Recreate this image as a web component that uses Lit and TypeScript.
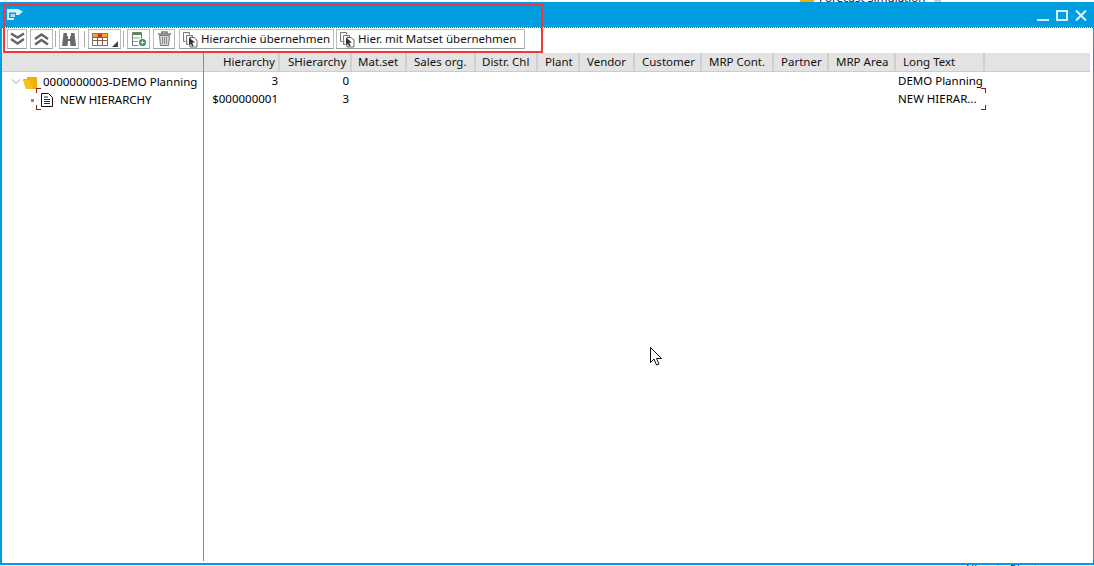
import { LitElement, html, css, svg } from "lit";
import { customElement } from "lit/decorators.js";

const copyIcon = svg`<svg class="ci" width="17" height="17" viewBox="0 0 17 17"><path d="M1.500 1.500h6v2M1.500 1.500v9h2" fill="#eee" stroke="#777"/><path d="M4.500 4.500h6v2M4.500 4.500v9h2" fill="#ddd" stroke="#777"/><path d="M8 6.500h4l3 2.500v7H8z" fill="#fff" stroke="#666"/><path d="M7 6.500l6 5-2.800.3 1.400 3-1.500.7-1.300-3-1.800 1.800z" fill="#333"/></svg>`;

const cols: [string, number, number][] = [
  ["Hierarchy", 76, 19], ["SHierarchy", 72, 8], ["Mat.set", 55, 6], ["Sales org.", 69, 7],
  ["Distr. Chl", 62, 6], ["Plant", 42, 7], ["Vendor", 55, 7], ["Customer", 67, 7],
  ["MRP Cont.", 72, 7], ["Partner", 55, 7], ["MRP Area", 67, 7], ["Long Text", 89, 7],
];

@customElement("app-root")
export class AppRoot extends LitElement {
  static styles = css`
    :host { display: block; position: relative; width: 1094px; height: 566px; overflow: hidden; background: #fff;
      font-family: "Noto Sans", sans-serif; font-size: 11.5px; color: #000; }
    .behind { position: absolute; white-space: nowrap; color: #222; }
    .b1 { left: 800px; top: -8px; width: 14px; height: 10px; background: #f0b000; }
    .b2 { left: 819px; top: -10px; }
    .b3 { left: 934px; top: -8px; width: 7px; height: 10px; background: #ccc; }
    .b4 { left: 964px; top: 561px; }
    .window { position: absolute; inset: 2px 0 1px 0; border: 2px solid #009de0; border-top: 0; border-right-width: 1px; display: flex; flex-direction: column; background: #fff; }
    .title { height: 25px; margin: 0 -1px 0 -2px; background: #009de0; display: flex; align-items: center; justify-content: space-between; padding: 0 7px 0 7px; flex: none; }
    .winbtns { display: flex; gap: 7px; align-items: center; }
    .toolbar { height: 26px; flex: none; display: flex; align-items: flex-start; padding: 1px 0 0 5px; border-top: 1px dotted #555; box-sizing: border-box; }
    .tb { height: 20px; box-sizing: border-box; border: 1px solid #bbb; border-bottom-color: #999; background: #fff; display: flex; align-items: center; justify-content: center; color: #111; white-space: nowrap; flex: none; }
    .sep { width: 1px; height: 16px; background: #aaa; margin: 2px 3px 0 2px; flex: none; }
    .sp3 { width: 3px; flex: none; }
    .sp4 { width: 4px; flex: none; }
    .sp2 { width: 2px; flex: none; }
    .txt { gap: 2px; padding: 0 0 0 2px; justify-content: flex-start; }
    .txt span { margin-top: -2px; }
    .ci { flex: none; }
    .main { flex: 1; display: flex; min-height: 0; padding: 0 3px 2px 0; }
    .tree { width: 201px; flex: none; border-right: 1px solid #8a8a8a; }
    .tree-head { height: 18px; background: #e3e3e3; border-bottom: 1px solid #ccc; }
    .tree-body { padding-top: 1px; }
    .node { height: 18px; display: flex; align-items: center; white-space: nowrap; position: relative; }
    .node span { margin-top: -2px; }
    .node svg { flex: none; }
    .caret { margin-left: 9px; }
    .folder { margin: 0 6px 0 2px; }
    .bullet { width: 3px; height: 3px; background: #888; margin: 0 7px 0 29px; flex: none; }
    .doc { margin-right: 7px; }
    .mark { position: absolute; width: 4px; height: 4px; border: 0 solid #a01020; }
    .ml { left: 34px; border-left-width: 1px; }
    .mr { left: 777px; border-right-width: 1px; }
    .mt { top: -3px; border-top-width: 1px; }
    .mb { bottom: -1px; border-bottom-width: 1px; }
    .grid { flex: 1; min-width: 0; }
    .head { height: 18px; display: flex; background: #e3e3e3; border-bottom: 1px solid #ccc; }
    .hc { box-sizing: border-box; border-right: 2px solid #cfcfcf; white-space: nowrap; flex: none; line-height: 18px; color: #111; }
    .rows { padding-top: 1px; }
    .row { height: 18px; display: flex; align-items: flex-start; line-height: 16px; position: relative; white-space: nowrap; }
    .c { box-sizing: border-box; flex: none; }
    .r { text-align: right; }
    .c1 { width: 74px; }
    .c2 { width: 71px; }
    .gap { width: 549px; }
    .red { position: absolute; left: 3px; top: 4px; width: 540px; height: 49px; box-sizing: border-box; border: 2px solid #f0383f; pointer-events: none; }
    .cursor { position: absolute; left: 650px; top: 347px; }
    .w20 { width: 20px; } .w23 { width: 23px; } .w22 { width: 22px; }
    .grid-l { width: 22px; border-right: 0; }
    .grid-r { width: 11px; border-left: 0; align-items: flex-end; padding-bottom: 1px; }
    .sep-a { margin-left: 5px; }
    .sep-b { margin-left: 2px; }
    .w155 { width: 155px; } .w189 { width: 189px; }
  `;

  render() {
    return html`
      <div class="behind b1"></div>
      <div class="behind b2">Forecast Simulation</div>
      <div class="behind b3"></div>
      <div class="behind b4">Allocate Plants</div>
      <div class="window">
        <div class="title">
          <svg width="16" height="11" viewBox="0 0 16 11"><path d="M0 0h11l5 2.500L12 6H9V3.500H2V9h5v2H0z" fill="#d6f0fa"/><path d="M3.500 5H8v3H3.500z" fill="#a8dff2"/></svg>
          <div class="winbtns">
            <svg width="12" height="12" viewBox="0 0 12 12"><rect y="10" width="12" height="2" fill="#d6f0fa"/></svg>
            <svg width="12" height="12" viewBox="0 0 12 12"><path d="M1 2h10v9H1z" fill="none" stroke="#d6f0fa" stroke-width="2"/></svg>
            <svg width="12" height="12" viewBox="0 0 12 12"><path d="M1 1.500l10 10M11 1.500l-10 10" stroke="#e4f5fb" stroke-width="2" fill="none"/></svg>
          </div>
        </div>
        <div class="toolbar">
          <div class="tb w20"><svg width="17" height="14" viewBox="0 0 17 14"><path d="M2 1.500l6.500 4 6.500-4M2 7l6.500 4.500L15 7" fill="none" stroke="#666" stroke-width="2.500"/></svg></div>
          <div class="sp3"></div>
          <div class="tb w23"><svg width="17" height="14" viewBox="0 0 17 14"><path d="M2 7l6.500-4.500L15 7M2 12.500l6.500-4.500 6.500 4.500" fill="none" stroke="#666" stroke-width="2.500"/></svg></div>
          <div class="sep"></div>
          <div class="tb w20"><svg width="16" height="15" viewBox="0 0 16 15"><path d="M2.500 1h3.500v3h1v3h2V4h1V1h3.500l1.500 13h-5.500l-.5-5h-2l-.5 5H1z" fill="#6a6a6a"/></svg></div>
          <div class="sep sep-a"></div>
          <div class="tb grid-l"><svg width="16" height="13" viewBox="0 0 16 13"><rect x=".5" y=".5" width="15" height="12" fill="#fff" stroke="#777"/><rect x="1" y="1" width="4.500" height="3" fill="#e8b020"/><rect x="5.500" y="1" width="5" height="3" fill="#d83020"/><rect x="10.500" y="1" width="4.500" height="3" fill="#e8b020"/><path d="M5.500 4v8M10.500 4v8M1 7.500h14M1 4.500h14" stroke="#8a5a50"/></svg></div>
          <div class="tb grid-r"><svg width="6" height="6" viewBox="0 0 6 6"><path d="M6 0v6H0z" fill="#444"/></svg></div>
          <div class="sep sep-b"></div>
          <div class="tb w23"><svg width="17" height="16" viewBox="0 0 17 16"><path d="M2.500 1.500h9v6M2.500 1.500v13h6" fill="none" stroke="#777"/><rect x="3" y="2" width="8" height="2" fill="#3aa04a"/><path d="M3 7h7M3 10.500h5" stroke="#999"/><circle cx="12.500" cy="11.500" r="3.500" fill="#1a9a50"/><path d="M10.500 11.500h4M12.500 9.500v4" stroke="#fff"/></svg></div>
          <div class="sp3"></div>
          <div class="tb w22"><svg width="15" height="16" viewBox="0 0 15 16"><path d="M5 2.500V1h5v1.500M1 3h13" stroke="#777" stroke-width="1.500" fill="none"/><path d="M2.500 4.500h10l-1 10h-8z" fill="#d8d8d8" stroke="#777"/><path d="M5.500 6v7M7.500 6v7M9.500 6v7" stroke="#888"/></svg></div>
          <div class="sp4"></div>
          <div class="tb txt w155">${copyIcon}<span>Hierarchie übernehmen</span></div>
          <div class="sp2"></div>
          <div class="tb txt w189">${copyIcon}<span>Hier. mit Matset übernehmen</span></div>
        </div>
        <div class="main">
          <div class="tree">
            <div class="tree-head"></div>
            <div class="tree-body">
              <div class="node">
                <svg class="caret" width="10" height="6" viewBox="0 0 10 6"><path d="M1 .5l4 4 4-4" fill="none" stroke="#999"/></svg>
                <svg class="folder" width="14" height="13" viewBox="0 0 14 13"><path d="M0 3h4V1h10v12H3z" fill="#f0b000"/><path d="M0 4l3 9h7L7 4z" fill="#f6c020"/></svg>
                <span>0000000003-DEMO Planning</span>
              </div>
              <div class="node">
                <div class="bullet"></div>
                <svg class="doc" width="12" height="14" viewBox="0 0 12 14"><path d="M.5.500h7l4 4v9H.5z" fill="#fff" stroke="#111"/><path d="M3 4h4M3 6.500h6M3 8.500h6M3 10.500h6" stroke="#102090"/></svg>
                <span>NEW HIERARCHY</span>
                <i class="mark ml mt"></i>
                <i class="mark ml mb"></i>
              </div>
            </div>
          </div>
          <div class="grid">
            <div class="head">
              ${cols.map(([t, w, p]) => html`<div class="hc" style="width:${w}px;padding-left:${p}px">${t}</div>`)}
            </div>
            <div class="rows">
              <div class="row">
                <div class="c r c1">3</div><div class="c r c2">0</div>
                <div class="c gap"></div><div class="c">DEMO Planning</div>
              </div>
              <div class="row">
                <div class="c r c1">$000000001</div><div class="c r c2">3</div>
                <div class="c gap"></div><div class="c">NEW HIERAR...</div>
                <i class="mark mr mt"></i>
                <i class="mark mr mb"></i>
              </div>
            </div>
          </div>
        </div>
      </div>
      <div class="red"></div>
      <svg class="cursor" width="14" height="20" viewBox="0 0 14 20"><path d="M.5.500v15l3.500-3.500 2.500 6 2.500-1-2.500-5.500h5z" fill="#fff" stroke="#111"/></svg>
    `;
  }
}
